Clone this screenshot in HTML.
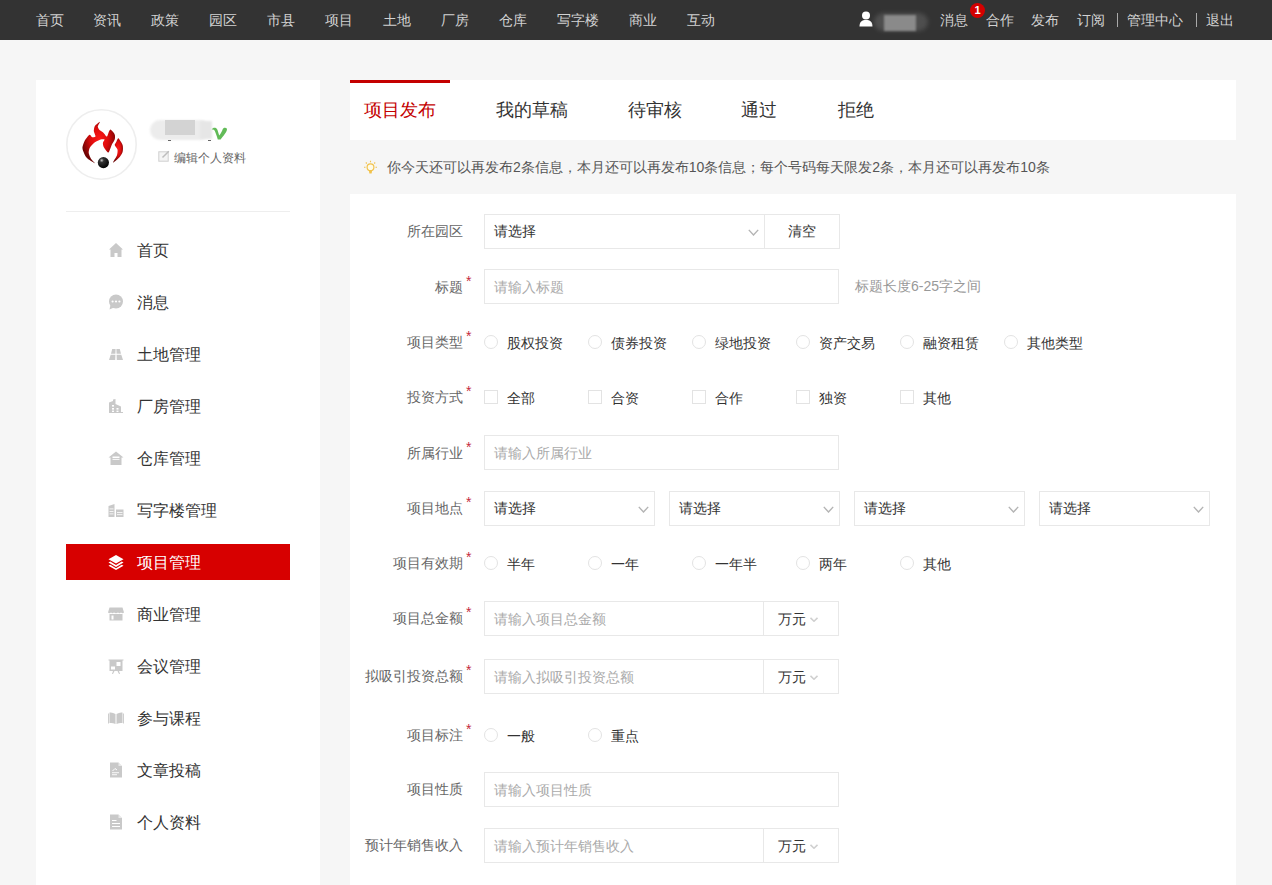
<!DOCTYPE html>
<html><head><meta charset="utf-8">
<style>
*{margin:0;padding:0;box-sizing:border-box}
html,body{width:1272px;height:885px;overflow:hidden;background:#f6f6f6;font-family:"Liberation Sans",sans-serif;color:#333}
.abs{position:absolute}
#hdr{position:absolute;left:0;top:0;width:1272px;height:40px;background:#333}
#hdr span{position:absolute;top:0;line-height:40px;font-size:14px;color:#d2d2d2;white-space:nowrap}
#side{position:absolute;left:36px;top:80px;width:284px;height:805px;background:#fff}
#main{position:absolute;left:350px;top:80px;width:886px;height:805px;background:#fff}
.tab{position:absolute;top:0;line-height:60px;font-size:18px;color:#333;white-space:nowrap}
.menu{position:absolute;left:30px;width:224px;height:36px}
.menu .t{position:absolute;left:71px;top:1px;line-height:36px;font-size:16px;color:#333;white-space:nowrap}
.menu svg{position:absolute;left:42px;top:10px;width:16px;height:16px}
.menu.on{background:#d70000}
.menu.on .t{color:#fff}
.lbl{position:absolute;right:809px;font-size:14px;color:#666;white-space:nowrap;text-align:right;line-height:20px}
.star{position:absolute;left:466px;font-size:14px;color:#c42a3c;line-height:14px}
.inp{position:absolute;height:35px;border:1px solid #e8e8e8;background:#fff}
.inp .ph{position:absolute;left:9px;top:1px;line-height:33px;font-size:14px;color:#aaa;white-space:nowrap}
.inp .v{position:absolute;left:9px;top:0;line-height:33px;font-size:14px;color:#333;white-space:nowrap}
.chev{position:absolute;width:11px;height:7px}
.rd{position:absolute;width:14px;height:14px;border:1px solid #e3e3e3;border-radius:50%;background:#fff}
.cb{position:absolute;width:14px;height:14px;border:1px solid #e3e3e3;background:#fff}
.ot{position:absolute;font-size:14px;color:#333;line-height:20px;white-space:nowrap}
</style></head>
<body>
<div id="hdr">
<span style="left:36px">首页</span>
<span style="left:93px">资讯</span>
<span style="left:151px">政策</span>
<span style="left:209px">园区</span>
<span style="left:267px">市县</span>
<span style="left:325px">项目</span>
<span style="left:383px">土地</span>
<span style="left:441px">厂房</span>
<span style="left:499px">仓库</span>
<span style="left:557px">写字楼</span>
<span style="left:629px">商业</span>
<span style="left:687px">互动</span>

<svg class="abs" style="left:859px;top:11px" width="14" height="16" viewBox="0 0 14 16"><circle cx="7" cy="4.5" r="4" fill="#fff"/><path d="M0.5 15.5 C0.5 10.5 3 9 7 9 C11 9 13.5 10.5 13.5 15.5 Z" fill="#fff"/></svg>
<div class="abs" style="left:874px;top:13px;width:54px;height:18px;border-radius:9px;background:#555;filter:blur(2px);opacity:.8"></div>
<div class="abs" style="left:884px;top:15px;width:32px;height:16px;background:#8a8a8a;filter:blur(1px)"></div>
<span style="left:940px">消息</span>
<div class="abs" style="left:970px;top:3px;width:15px;height:15px;border-radius:50%;background:#d40000;color:#fff;font-size:11px;font-weight:bold;line-height:15px;text-align:center">1</div>
<span style="left:986px">合作</span>
<span style="left:1031px">发布</span>
<span style="left:1077px">订阅</span>
<div class="abs" style="left:1117px;top:13px;width:1px;height:14px;background:#aaa"></div>
<span style="left:1127px">管理中心</span>
<div class="abs" style="left:1196px;top:13px;width:1px;height:14px;background:#aaa"></div>
<span style="left:1206px">退出</span>
</div>

<div id="side">
<svg class="abs" style="left:30px;top:29px" width="71" height="71" viewBox="0 0 71 71">
<defs><radialGradient id="fg" cx="0.52" cy="0.42" r="0.55"><stop offset="0" stop-color="#ff1a1a"/><stop offset="0.5" stop-color="#dd0c0c"/><stop offset="1" stop-color="#6e0404"/></radialGradient>
<radialGradient id="bg2" cx="0.35" cy="0.3" r="0.75"><stop offset="0" stop-color="#c8c8c8"/><stop offset="0.25" stop-color="#333"/><stop offset="1" stop-color="#000"/></radialGradient></defs>
<circle cx="35.5" cy="35.5" r="34.7" fill="#fff" stroke="#eeeeee" stroke-width="1.6"/>
<g transform="translate(0,0)"><path d="M28.9 54.2 C28.4 54.1 21.9 50.3 20.5 48.5 C19.0 46.8 16.7 41.5 16.5 39.5 C16.3 37.5 18.0 33.2 18.8 31.6 C19.6 30.0 22.7 26.1 23.6 25.7 C24.4 25.3 25.4 28.0 26.1 28.2 C26.8 28.4 29.3 28.4 29.5 27.6 C29.7 26.9 27.9 23.2 27.8 22.0 C27.8 20.7 28.2 18.0 28.9 16.9 C29.7 15.8 33.7 12.6 34.0 12.7 C34.4 12.7 31.8 16.5 31.8 17.5 C31.7 18.4 32.8 20.1 33.5 20.9 C34.1 21.6 36.6 22.9 37.4 23.7 C38.3 24.5 40.2 27.6 40.8 27.6 C41.4 27.6 42.1 24.5 42.5 23.7 C42.9 22.9 43.8 20.4 44.5 20.6 C45.2 20.8 48.2 24.2 48.7 25.4 C49.2 26.5 49.1 29.3 48.7 30.5 C48.4 31.7 46.6 34.0 45.9 35.6 C45.2 37.1 43.4 43.1 42.5 43.5 C41.6 43.8 38.6 39.5 38.0 38.4 C37.3 37.3 36.8 34.8 36.9 33.9 C36.9 32.9 38.8 30.9 38.6 30.5 C38.3 30.1 35.7 30.1 34.6 30.5 C33.5 30.8 30.2 32.4 28.9 33.3 C27.7 34.2 24.6 37.1 23.9 38.4 C23.1 39.6 22.6 42.7 22.7 44.0 C22.9 45.3 24.3 48.5 25.0 49.7 C25.7 50.9 29.5 54.3 28.9 54.2 Z" fill="url(#fg)"/>
<path d="M52.4 29.3 C53.1 29.7 56.1 34.5 56.6 36.1 C57.1 37.7 57.1 41.4 56.6 42.9 C56.2 44.4 53.8 47.9 52.7 49.1 C51.6 50.4 47.2 54.0 47.0 53.6 C46.8 53.3 50.5 47.8 51.0 46.3 C51.5 44.8 51.8 41.8 51.5 40.6 C51.3 39.5 48.9 37.0 48.7 36.1 C48.6 35.2 50.0 33.5 50.4 32.7 C50.8 31.9 51.7 28.9 52.4 29.3 Z" fill="url(#fg)"/></g>
<circle cx="37.4" cy="53.6" r="5.6" fill="url(#bg2)"/>
</svg>
<div class="abs" style="left:114px;top:40px;width:60px;height:20px;border-radius:10px;background:#ececec;filter:blur(1px)"></div>
<div class="abs" style="left:129px;top:40px;width:30px;height:15px;background:#d3d3d3;filter:blur(0.6px)"></div>
<div class="abs" style="left:164px;top:41px;width:12px;height:18px;background:#e6e6e6;filter:blur(1px)"></div>
<div class="abs" style="left:132px;top:60px;width:3px;height:1px;background:#666"></div>
<div class="abs" style="left:172px;top:60px;width:3px;height:1px;background:#666"></div>
<svg class="abs" style="left:175px;top:46px" width="17" height="14" viewBox="0 0 17 14"><path d="M0.8 3.5 C1.5 1.8 4.5 1 6 3 C6.8 4.5 7.5 7.5 8.2 9.5 C9.8 7.4 11.2 5.2 11.6 3.5 C12 1.6 14.8 1 15.8 2.6 C16.6 4.4 14.6 7.6 9.6 13.5 L6.8 13.5 C5.5 9.5 4.6 6.5 3.6 4.6 C3 3.6 2 3.3 0.8 3.5 Z" fill="#62bb58"/></svg>
<svg class="abs" style="left:122px;top:70px" width="12" height="12" viewBox="0 0 12 12"><rect x="0.8" y="1.8" width="9.4" height="9.4" fill="#f4f4f4" stroke="#cfcfcf" stroke-width="1"/><path d="M4.5 7.5 L10.8 1.2" stroke="#bdbdbd" stroke-width="1.5"/></svg>
<span class="abs" style="left:138px;top:70px;font-size:12px;line-height:16px;color:#666;white-space:nowrap">编辑个人资料</span>
<div class="abs" style="left:30px;top:131px;width:224px;height:1px;background:#eee"></div>
<div class="menu" style="top:152px"><svg viewBox="0 0 16 16"><path d="M8 1 L15 7.5 L13.5 7.5 L13.5 15 L9.5 15 L9.5 11 L6.5 11 L6.5 15 L2.5 15 L2.5 7.5 L1 7.5 Z" fill="#c9c9c9"/></svg><span class="t">首页</span></div>
<div class="menu" style="top:204px"><svg viewBox="0 0 16 16"><circle cx="8" cy="7.5" r="7" fill="#c9c9c9"/><path d="M2.5 11 L1.5 15.5 L6 13.5 Z" fill="#c9c9c9"/><circle cx="4.6" cy="7.5" r="1.1" fill="#fff"/><circle cx="8" cy="7.5" r="1.1" fill="#fff"/><circle cx="11.4" cy="7.5" r="1.1" fill="#fff"/></svg><span class="t">消息</span></div>
<div class="menu" style="top:256px"><svg viewBox="0 0 16 16"><path d="M4.2 3 L7.6 3 L7.4 7.8 L3 7.8 Z M8.4 3 L11.8 3 L13 7.8 L8.6 7.8 Z M2.7 8.8 L7.4 8.8 L7.2 14 L1 14 Z M8.6 8.8 L13.3 8.8 L15 14 L8.8 14 Z" fill="#c9c9c9"/></svg><span class="t">土地管理</span></div>
<div class="menu" style="top:308px"><svg viewBox="0 0 16 16"><path d="M1 15 L1 4.5 L5 3 L5 1.5 L7.5 1 L7.5 6 L13 8.5 L13 14 L15 14 L15 15 Z" fill="#c9c9c9"/><rect x="4" y="7" width="2" height="1.6" fill="#fff"/><rect x="4" y="10" width="2" height="1.6" fill="#fff"/><rect x="8.5" y="10" width="2" height="1.6" fill="#fff"/><rect x="4" y="12.6" width="2" height="1.4" fill="#fff"/><rect x="8.5" y="12.6" width="2" height="1.4" fill="#fff"/></svg><span class="t">厂房管理</span></div>
<div class="menu" style="top:360px"><svg viewBox="0 0 16 16"><path d="M8 1.5 L15.5 7.5 L13.5 7.5 L13.5 15 L2.5 15 L2.5 7.5 L0.5 7.5 Z" fill="#c9c9c9"/><rect x="4.5" y="6.5" width="7" height="1.6" fill="#fff"/><rect x="4.5" y="9" width="7" height="0.8" fill="#fff"/></svg><span class="t">仓库管理</span></div>
<div class="menu" style="top:412px"><svg viewBox="0 0 16 16"><path d="M0.5 15 L0.5 4 L6.5 2 L6.5 15 Z M8 7.5 L15.5 7.5 L15.5 15 L8 15 Z" fill="#c9c9c9"/><rect x="1.5" y="6.5" width="4" height="0.8" fill="#fff"/><rect x="1.5" y="9" width="4" height="0.8" fill="#fff"/><rect x="1.5" y="11.5" width="4" height="0.8" fill="#fff"/><rect x="9" y="10" width="5.5" height="0.8" fill="#fff"/><rect x="9" y="12.3" width="5.5" height="0.8" fill="#fff"/></svg><span class="t">写字楼管理</span></div>
<div class="menu on" style="top:464px"><svg viewBox="0 0 16 16"><path d="M8 1 L15.5 5.3 L8 9.6 L0.5 5.3 Z" fill="#fff"/><path d="M2.2 7.6 L8 11 L13.8 7.6 L15.5 8.6 L8 13 L0.5 8.6 Z" fill="#fff"/><path d="M2.2 10.8 L8 14.2 L13.8 10.8 L15.5 11.8 L8 16 L0.5 11.8 Z" fill="#fff"/></svg><span class="t">项目管理</span></div>
<div class="menu" style="top:516px"><svg viewBox="0 0 16 16"><path d="M1.5 1.5 L14.5 1.5 L16 6.5 Q14.5 8 13 6.5 Q11.5 8 10 6.5 Q8 8 6 6.5 Q4.5 8 3 6.5 Q1.5 8 0 6.5 Z" fill="#c9c9c9"/><path d="M1.5 8 L14.5 8 L14.5 14.5 L1.5 14.5 Z" fill="#c9c9c9"/><rect x="3.5" y="9.5" width="2" height="4" fill="#fff"/></svg><span class="t">商业管理</span></div>
<div class="menu" style="top:568px"><svg viewBox="0 0 16 16"><path d="M0.5 1.5 L15.5 1.5 L15.5 2.5 L14.5 2.5 L14.5 13 L1.5 13 L1.5 2.5 L0.5 2.5 Z" fill="#c9c9c9"/><rect x="8.5" y="4" width="4" height="4" fill="#fff"/><rect x="3" y="8.5" width="4" height="3" fill="#fff"/><path d="M5 13 L4 16 L5 16 L6.5 13 Z M11 13 L12 16 L11 16 L9.5 13 Z" fill="#c9c9c9"/></svg><span class="t">会议管理</span></div>
<div class="menu" style="top:620px"><svg viewBox="0 0 16 16"><path d="M1.5 2.5 Q4.5 2 7.5 4 L7.5 14 Q4.5 12.5 1.5 13 Z M8.5 4 Q11.5 2 14.5 2.5 L14.5 13 Q11.5 12.5 8.5 14 Z" fill="#c9c9c9"/><rect x="0" y="3.5" width="0.9" height="10" fill="#c9c9c9"/><rect x="15.1" y="3.5" width="0.9" height="10" fill="#c9c9c9"/></svg><span class="t">参与课程</span></div>
<div class="menu" style="top:672px"><svg viewBox="0 0 16 16"><path d="M2 0.5 L10.5 0.5 L14 4 L14 15.5 L2 15.5 Z" fill="#c9c9c9"/><path d="M10.5 0.5 L10.5 4 L14 4" fill="#fff" opacity=".6"/><path d="M4.5 9 L7 6.5 L9 8" stroke="#fff" stroke-width="1" fill="none"/><rect x="4" y="10.3" width="7" height="0.9" fill="#fff"/><rect x="4" y="12.3" width="5" height="0.9" fill="#fff"/></svg><span class="t">文章投稿</span></div>
<div class="menu" style="top:724px"><svg viewBox="0 0 16 16"><path d="M2 0.5 L10.5 0.5 L14 4 L14 15.5 L2 15.5 Z" fill="#c9c9c9"/><path d="M10.5 0.5 L10.5 4 L14 4" fill="#fff" opacity=".6"/><rect x="4" y="6" width="4.5" height="1" fill="#fff"/><rect x="4" y="9" width="8" height="1" fill="#fff"/><rect x="4" y="12" width="8" height="1" fill="#fff"/></svg><span class="t">个人资料</span></div>
</div>
<div class="abs" style="left:350px;top:80px;width:886px;height:60px;background:#fff"></div>
<div class="abs" style="left:350px;top:80px;width:100px;height:3px;background:#c40000"></div>
<span class="tab" style="left:364px;top:80px;color:#c40000">项目发布</span>
<span class="tab" style="left:496px;top:80px">我的草稿</span>
<span class="tab" style="left:628px;top:80px">待审核</span>
<span class="tab" style="left:741px;top:80px">通过</span>
<span class="tab" style="left:838px;top:80px">拒绝</span>
<svg class="abs" style="left:363px;top:160px" width="15" height="15" viewBox="0 0 15 15"><circle cx="7.5" cy="7.2" r="3.4" stroke="#f1c24c" stroke-width="1.2" fill="#fffbe8"/><path d="M5.9 10.6 L9.1 10.6 L8.6 13.4 L6.4 13.4 Z" fill="#f1c24c"/><path d="M7.5 0.8 L7.5 2.2 M1 7.2 L2.5 7.2 M12.5 7.2 L14 7.2 M2.8 2.5 L3.8 3.5 M12.2 2.5 L11.2 3.5" stroke="#f1c24c" stroke-width="1.1"/></svg>
<span class="abs" style="left:387px;top:157px;font-size:14px;line-height:20px;color:#555;white-space:nowrap">你今天还可以再发布2条信息，本月还可以再发布10条信息；每个号码每天限发2条，本月还可以再发布10条</span>
<div class="abs" style="left:350px;top:194px;width:886px;height:691px;background:#fff"></div>
<span class="lbl" style="top:221px">所在园区</span><div class="inp" style="left:484px;top:214px;width:281px"><span class="v">请选择</span></div><svg class="abs" style="left:748px;top:229px" width="11" height="7" viewBox="0 0 11 7"><path d="M0.8 0.9 L5.5 6 L10.2 0.9" stroke="#b4b4b4" stroke-width="1.4" fill="none"/></svg><div class="inp" style="left:764px;top:214px;width:76px"><span class="v" style="left:23px">清空</span></div><span class="lbl" style="top:277px">标题</span><span class="star" style="top:274px">*</span><div class="inp" style="left:484px;top:269px;width:355px"><span class="ph">请输入标题</span></div><span class="ot" style="left:855px;top:276px;color:#999">标题长度6-25字之间</span><span class="lbl" style="top:332px">项目类型</span><span class="star" style="top:329px">*</span><div class="rd" style="left:484px;top:335px"></div><span class="ot" style="left:507px;top:333px">股权投资</span><div class="rd" style="left:588px;top:335px"></div><span class="ot" style="left:611px;top:333px">债券投资</span><div class="rd" style="left:692px;top:335px"></div><span class="ot" style="left:715px;top:333px">绿地投资</span><div class="rd" style="left:796px;top:335px"></div><span class="ot" style="left:819px;top:333px">资产交易</span><div class="rd" style="left:900px;top:335px"></div><span class="ot" style="left:923px;top:333px">融资租赁</span><div class="rd" style="left:1004px;top:335px"></div><span class="ot" style="left:1027px;top:333px">其他类型</span><span class="lbl" style="top:387px">投资方式</span><span class="star" style="top:384px">*</span><div class="cb" style="left:484px;top:390px"></div><span class="ot" style="left:507px;top:388px">全部</span><div class="cb" style="left:588px;top:390px"></div><span class="ot" style="left:611px;top:388px">合资</span><div class="cb" style="left:692px;top:390px"></div><span class="ot" style="left:715px;top:388px">合作</span><div class="cb" style="left:796px;top:390px"></div><span class="ot" style="left:819px;top:388px">独资</span><div class="cb" style="left:900px;top:390px"></div><span class="ot" style="left:923px;top:388px">其他</span><span class="lbl" style="top:443px">所属行业</span><span class="star" style="top:440px">*</span><div class="inp" style="left:484px;top:435px;width:355px"><span class="ph">请输入所属行业</span></div><span class="lbl" style="top:498px">项目地点</span><span class="star" style="top:495px">*</span><div class="inp" style="left:484px;top:491px;width:171px"><span class="v">请选择</span></div><svg class="abs" style="left:638px;top:506px" width="11" height="7" viewBox="0 0 11 7"><path d="M0.8 0.9 L5.5 6 L10.2 0.9" stroke="#b4b4b4" stroke-width="1.4" fill="none"/></svg><div class="inp" style="left:669px;top:491px;width:171px"><span class="v">请选择</span></div><svg class="abs" style="left:823px;top:506px" width="11" height="7" viewBox="0 0 11 7"><path d="M0.8 0.9 L5.5 6 L10.2 0.9" stroke="#b4b4b4" stroke-width="1.4" fill="none"/></svg><div class="inp" style="left:854px;top:491px;width:171px"><span class="v">请选择</span></div><svg class="abs" style="left:1008px;top:506px" width="11" height="7" viewBox="0 0 11 7"><path d="M0.8 0.9 L5.5 6 L10.2 0.9" stroke="#b4b4b4" stroke-width="1.4" fill="none"/></svg><div class="inp" style="left:1039px;top:491px;width:171px"><span class="v">请选择</span></div><svg class="abs" style="left:1193px;top:506px" width="11" height="7" viewBox="0 0 11 7"><path d="M0.8 0.9 L5.5 6 L10.2 0.9" stroke="#b4b4b4" stroke-width="1.4" fill="none"/></svg><span class="lbl" style="top:553px">项目有效期</span><span class="star" style="top:550px">*</span><div class="rd" style="left:484px;top:556px"></div><span class="ot" style="left:507px;top:554px">半年</span><div class="rd" style="left:588px;top:556px"></div><span class="ot" style="left:611px;top:554px">一年</span><div class="rd" style="left:692px;top:556px"></div><span class="ot" style="left:715px;top:554px">一年半</span><div class="rd" style="left:796px;top:556px"></div><span class="ot" style="left:819px;top:554px">两年</span><div class="rd" style="left:900px;top:556px"></div><span class="ot" style="left:923px;top:554px">其他</span><span class="lbl" style="top:608px">项目总金额</span><span class="star" style="top:605px">*</span><div class="inp" style="left:484px;top:601px;width:280px"><span class="ph">请输入项目总金额</span></div><div class="inp" style="left:763px;top:601px;width:76px"><span class="v" style="left:14px;top:1px">万元</span></div><svg class="abs" style="left:810px;top:617px" width="8" height="5" viewBox="0 0 8 5"><path d="M0.5 0.8 L4.0 4.2 L7.5 0.8" stroke="#d0d0d0" stroke-width="1.6" fill="none"/></svg><span class="lbl" style="top:666px">拟吸引投资总额</span><span class="star" style="top:663px">*</span><div class="inp" style="left:484px;top:659px;width:280px"><span class="ph">请输入拟吸引投资总额</span></div><div class="inp" style="left:763px;top:659px;width:76px"><span class="v" style="left:14px;top:1px">万元</span></div><svg class="abs" style="left:810px;top:675px" width="8" height="5" viewBox="0 0 8 5"><path d="M0.5 0.8 L4.0 4.2 L7.5 0.8" stroke="#d0d0d0" stroke-width="1.6" fill="none"/></svg><span class="lbl" style="top:725px">项目标注</span><span class="star" style="top:722px">*</span><div class="rd" style="left:484px;top:728px"></div><span class="ot" style="left:507px;top:726px">一般</span><div class="rd" style="left:588px;top:728px"></div><span class="ot" style="left:611px;top:726px">重点</span><span class="lbl" style="top:779px">项目性质</span><div class="inp" style="left:484px;top:772px;width:355px"><span class="ph">请输入项目性质</span></div><span class="lbl" style="top:835px">预计年销售收入</span><div class="inp" style="left:484px;top:828px;width:280px"><span class="ph">请输入预计年销售收入</span></div><div class="inp" style="left:763px;top:828px;width:76px"><span class="v" style="left:14px;top:1px">万元</span></div><svg class="abs" style="left:810px;top:844px" width="8" height="5" viewBox="0 0 8 5"><path d="M0.5 0.8 L4.0 4.2 L7.5 0.8" stroke="#d0d0d0" stroke-width="1.6" fill="none"/></svg>
</body></html>
